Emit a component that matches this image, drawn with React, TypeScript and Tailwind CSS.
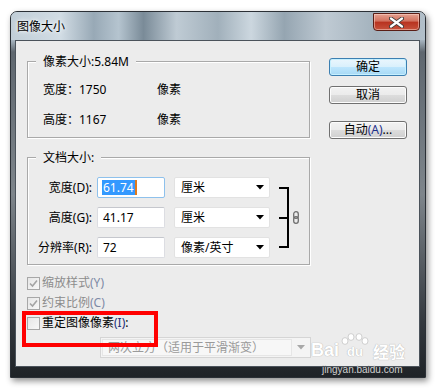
import React from "react";

const Tri = ({ c = "#000" }: { c?: string }) => (
  <svg width="8" height="5" viewBox="0 0 8 5">
    <path d="M0 0h8L4 4.5z" fill={c} />
  </svg>
);

const Check = ({ checked }: { checked?: boolean }) => (
  <div className="w-[13px] h-[13px] border border-[#a7a7a7] bg-[linear-gradient(135deg,#e6e6e6,#f8f8f8)] flex items-center justify-center shrink-0">
    {checked && (
      <svg width="9" height="9" viewBox="0 0 9 9">
        <path d="M1 4.5L3.5 7L8 1.5" stroke="#a4a4a4" strokeWidth="1.6" fill="none" />
      </svg>
    )}
  </div>
);

const Btn = ({ children, def }: { children: React.ReactNode; def?: boolean }) => (
  <div
    className={
      "w-[78px] h-[18px] rounded-[3px] border flex items-center justify-center text-[12px] leading-none text-black " +
      (def
        ? "border-[#3c7fb1] bg-[linear-gradient(#eaf6fd,#d9f0fc_50%,#bee6fd_50%,#a7d9f5)] shadow-[inset_0_0_0_1px_#c6f0ff]"
        : "border-[#707070] bg-[linear-gradient(#f2f2f2,#ebebeb_50%,#dddddd_50%,#cfcfcf)] shadow-[inset_0_0_0_1px_#fcfcfc]")
    }
  >
    {children}
  </div>
);

const Select = ({ text }: { text: string }) => (
  <div className="w-[96px] h-[21px] rounded-[2px] border border-[#e2e2e2] bg-white flex items-center justify-between pl-[6px] pr-[5px] text-[12px] leading-none">
    <span>{text}</span>
    <Tri />
  </div>
);

const Input = ({ text, focus }: { text: string; focus?: boolean }) => (
  <div
    className={
      "w-[68px] h-[21px] rounded-[2px] border bg-white flex items-center pl-[4px] text-[12px] leading-none " +
      (focus ? "border-[#8ec1ec]" : "border-[#dcdde2] border-t-[#c5c7cd]")
    }
  >
    {focus ? (
      <span className="flex items-center h-[15px]">
        <span className="bg-[#3399ff] text-white h-[15px] flex items-center px-[1px]">{text}</span>
        <span className="w-[2px] h-[15px] bg-[#e07a1c]" />
      </span>
    ) : (
      <span className="pl-[1px]">{text}</span>
    )}
  </div>
);

export default function App() {
  return (
    <div className="relative w-[438px] h-[388px] bg-white pt-[11px] pl-[10px] font-['Noto_Sans','Noto_Sans_CJK_SC',sans-serif] overflow-hidden">
      {/* Window */}
      <div className="w-[416px] h-[367px] rounded-t-[7px] border border-[#2b3036] bg-[linear-gradient(#b7c5cf,#a8b6c1_28px,#5f676f_40px,#7e858b_50%,#33383e_85%,#1f2327)] shadow-[2px_3px_6px_rgba(0,0,0,0.45)] flex flex-col">
        {/* Title bar */}
        <div className="h-[28px] flex justify-between rounded-t-[6px] bg-[linear-gradient(90deg,#c1ced8,#d1dce4_12%,#98a9b6_20%,#b5c4cf_26%,#7a8b98_32%,#bfcbd4_40%,#a1b0bb_50%,#ccd7df_58%,#95a5b1_66%,#bfcad3_76%,#a3b2bd_88%,#b2bfc9)]">
          <span className="self-center pl-[6px] pt-[2px] text-[12px] leading-none text-black [text-shadow:0_0_6px_#ffffff,0_0_3px_#ffffff]">
            图像大小
          </span>
          <div className="mt-[1px] mr-[5px] w-[47px] h-[18px] rounded-b-[4px] border border-[#5a1e16] bg-[linear-gradient(#e5a190,#d1705d_45%,#b8321f_50%,#c6523c)] flex items-center justify-center shadow-[inset_0_0_0_1px_rgba(255,220,210,0.5)]">
            <svg width="15" height="11" viewBox="0 0 15 11">
              <path
                d="M2 1.5L13 9.5M13 1.5L2 9.5"
                stroke="#3a3a3a"
                strokeWidth="4"
                strokeLinecap="round"
              />
              <path d="M2 1.5L13 9.5M13 1.5L2 9.5" stroke="#ffffff" strokeWidth="2.2" strokeLinecap="round" />
            </svg>
          </div>
        </div>

        {/* Client area */}
        <div className="ml-[4px] w-[405px] h-[327px] border border-[#4b535b] bg-[#ececec] flex text-[12px] leading-none text-black">
          {/* Left column */}
          <div className="pl-[11px] pt-[20px] flex flex-col">
            {/* Group 1 */}
            <div className="relative w-[283px] h-[77px] border border-[#a9a9a9] shadow-[inset_1px_1px_0_#fff,1px_1px_0_#fff]">
              <span className="absolute left-[8px] top-[-8px] bg-[#ececec] px-[7px] leading-[16px]">像素大小:5.84M</span>
              <div className="pl-[15px] pt-[13px]">
                <div className="h-[30px] flex items-center">
                  <span className="w-[36px]">宽度：</span>
                  <span className="w-[78px]">1750</span>
                  <span>像素</span>
                </div>
                <div className="h-[30px] flex items-center">
                  <span className="w-[36px]">高度：</span>
                  <span className="w-[78px]">1167</span>
                  <span>像素</span>
                </div>
              </div>
            </div>

            {/* Group 2 */}
            <div className="relative mt-[19px] w-[283px] h-[108px] border border-[#a9a9a9] shadow-[inset_1px_1px_0_#fff,1px_1px_0_#fff] flex items-center">
              <span className="absolute left-[8px] top-[-8px] bg-[#ececec] px-[7px] leading-[16px]">文档大小:</span>
              <div className="flex flex-col pt-[14px] pb-[1px]">
                {[
                  { l: "宽度(D):", v: "61.74", u: "厘米", f: true },
                  { l: "高度(G):", v: "41.17", u: "厘米" },
                  { l: "分辨率(R):", v: "72", u: "像素/英寸" },
                ].map((r) => (
                  <div key={r.l} className="h-[30px] flex items-center">
                    <span className="w-[65px] text-right pr-[1px]">{r.l}</span>
                    <div className="ml-[4px]">
                      <Input text={r.v} focus={r.f} />
                    </div>
                    <div className="ml-[9px]">
                      <Select text={r.u} />
                    </div>
                  </div>
                ))}
              </div>
              <div className="ml-[9px] mt-[13px] w-[10px] h-[61px] border-t-2 border-r-2 border-b-2 border-black flex items-center">
                <div className="w-[9px] h-[2px] bg-black" />
              </div>
              <div className="ml-[4px] mt-[13px]">
                <svg width="6" height="13" viewBox="0 0 6 13">
                  <rect x="0.7" y="0.7" width="4.6" height="6.6" rx="2.3" fill="none" stroke="#6e6e6e" strokeWidth="1.3" />
                  <rect x="0.7" y="5.7" width="4.6" height="6.6" rx="2.3" fill="none" stroke="#6e6e6e" strokeWidth="1.3" />
                </svg>
              </div>
            </div>

            {/* Checkboxes */}
            <div className="mt-[8px] flex flex-col">
              <div className="h-[20px] flex items-center gap-[2px]">
                <Check checked />
                <span className="text-[#8d8d8d]">
                  缩放样式<span className="text-[#7d8aa6]">(Y)</span>
                </span>
              </div>
              <div className="h-[20px] flex items-center gap-[2px]">
                <Check checked />
                <span className="text-[#8d8d8d]">
                  约束比例<span className="text-[#7d8aa6]">(C)</span>
                </span>
              </div>
              <div className="h-[20px] flex items-center gap-[2px]">
                <Check />
                <span className="text-black">
                  重定图像像素<span className="text-[#22307a]">(I)</span>:
                </span>
              </div>
              <div className="mt-[4px] ml-[73px] w-[211px] h-[21px] border border-[#d5d5d5] bg-[#f4f4f4] flex items-center p-[1px]">
                <div className="flex-1 h-full bg-[#f7f7f7] border border-[#e6e6e6] flex items-center pl-[5px] text-[#9a9a9a]">
                  两次立方（适用于平滑渐变）
                </div>
                <div className="w-[17px] flex justify-center">
                  <Tri c="#a8a8a8" />
                </div>
              </div>
            </div>
          </div>

          {/* Right column buttons */}
          <div className="ml-[18px] pt-[17px] flex flex-col">
            <Btn def>确定</Btn>
            <div className="mt-[10px]">
              <Btn>取消</Btn>
            </div>
            <div className="mt-[17px]">
              <Btn>
                自动<span className="text-[#1c2f8a]">(A)</span>...
              </Btn>
            </div>
          </div>
        </div>
      </div>

      {/* Red highlight */}
      <div className="absolute left-[22px] top-[311px] w-[136px] h-[36px] border-[4px] border-[#ff0000]" />

      {/* Watermark */}
      <div className="absolute left-[311px] top-[333px] flex items-end text-white font-['Liberation_Sans',sans-serif] [text-shadow:0_0_1px_#b8b8b8,0_0_1px_#b8b8b8]">
        <span className="text-[18px] font-bold leading-none">Bai</span>
        <span className="relative ml-[1px] flex flex-col items-center">
          <svg width="30" height="12" viewBox="0 0 30 12">
            <g fill="#ffffff" stroke="#c4c4c4" strokeWidth="0.8">
              <ellipse cx="5" cy="8" rx="3" ry="3.4" />
              <ellipse cx="11" cy="4" rx="3" ry="3.4" />
              <ellipse cx="19" cy="4" rx="3" ry="3.4" />
              <ellipse cx="25" cy="8" rx="3" ry="3.4" />
            </g>
          </svg>
          <span className="text-[13px] font-bold leading-none px-[3px] pb-[1px] rounded-[6px]">du</span>
        </span>
        <span className="ml-[3px] text-[16px] font-bold leading-none font-['Noto_Sans_CJK_SC',sans-serif]">经验</span>
      </div>
      <div className="absolute left-[322px] top-[365px] text-[10px] leading-none text-[#d0d0d0] font-['Liberation_Sans',sans-serif]">
        jingyan.baidu.com
      </div>
    </div>
  );
}
